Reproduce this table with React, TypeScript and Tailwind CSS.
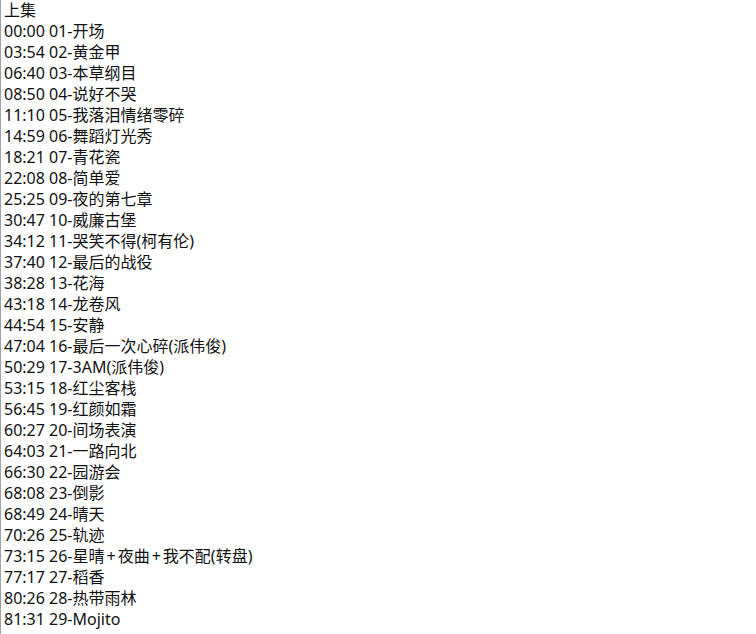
import React from "react";

const lines = [
  "上集",
  "00:00 01-开场",
  "03:54 02-黄金甲",
  "06:40 03-本草纲目",
  "08:50 04-说好不哭",
  "11:10 05-我落泪情绪零碎",
  "14:59 06-舞蹈灯光秀",
  "18:21 07-青花瓷",
  "22:08 08-简单爱",
  "25:25 09-夜的第七章",
  "30:47 10-威廉古堡",
  "34:12 11-哭笑不得(柯有伦)",
  "37:40 12-最后的战役",
  "38:28 13-花海",
  "43:18 14-龙卷风",
  "44:54 15-安静",
  "47:04 16-最后一次心碎(派伟俊)",
  "50:29 17-3AM(派伟俊)",
  "53:15 18-红尘客栈",
  "56:45 19-红颜如霜",
  "60:27 20-间场表演",
  "64:03 21-一路向北",
  "66:30 22-园游会",
  "68:08 23-倒影",
  "68:49 24-晴天",
  "70:26 25-轨迹",
  "73:15 26-星晴+夜曲+我不配(转盘)",
  "77:17 27-稻香",
  "80:26 28-热带雨林",
  "81:31 29-Mojito",
];

function Line({ text }: { text: string }) {
  const parts = text.split("+");
  return (
    <div className="whitespace-pre">
      {parts.map((p, i) => (
        <React.Fragment key={i}>
          {i > 0 && <span className="px-[2px]">+</span>}
          {p}
        </React.Fragment>
      ))}
    </div>
  );
}

export default function App() {
  return (
    <div className="w-[756px] h-[634px] overflow-hidden bg-white flex">
      <div className="w-px h-full bg-[#9aa4b0]" />
      <div
        className="pl-[3px] pt-0 text-[16px] leading-[21px] text-[#111]"
        style={{ fontFamily: '"Noto Sans", "Noto Sans CJK SC", sans-serif' }}
      >
        {lines.map((l, i) => (
          <Line key={i} text={l} />
        ))}
      </div>
    </div>
  );
}
